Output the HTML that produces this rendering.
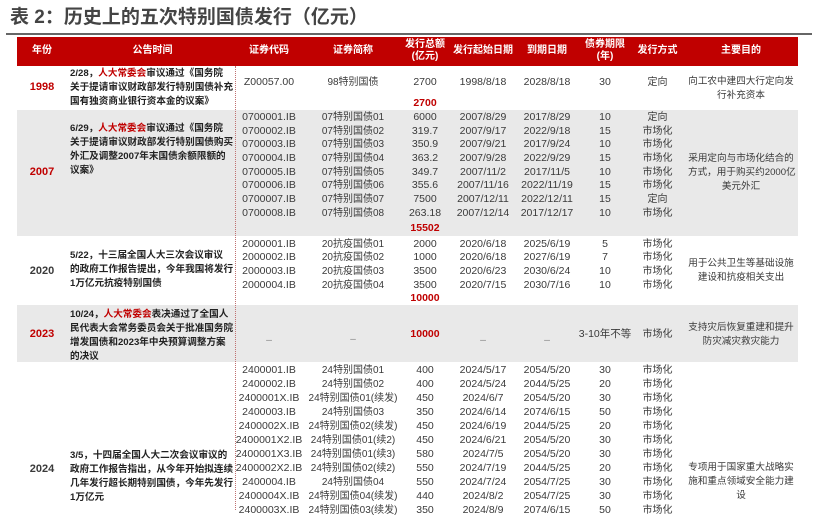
<!DOCTYPE html>
<html><head><meta charset="utf-8"><style>
*{margin:0;padding:0;box-sizing:border-box}
body{width:820px;height:510px;overflow:hidden;background:#fff;position:relative;font-family:"Liberation Sans","Noto Sans CJK SC",sans-serif;color:#3a3a3a;font-size:10.5px}
div{position:absolute}
.t{line-height:14px;height:14px;white-space:nowrap;text-align:center}
.y{left:17px;width:50px;font-weight:bold;font-size:11px}
.a{left:70px;width:170px;text-align:left;font-weight:bold;font-size:9.6px;color:#222}
.cd{left:235px;width:68px}
.nm{left:305px;width:96px;font-size:10px;margin-top:1px}
.am{left:408px;width:34px}
.st{left:452px;width:62px}
.en{left:516px;width:62px}
.tm{left:580px;width:50px}
.me{left:630px;width:55px;font-size:10px;margin-top:1px}
.pu{left:688px;width:106px;font-size:9.6px}
.r{color:#c00000}
.b{font-weight:bold}
.h{color:#fff;font-weight:bold;font-size:10px;line-height:12px;text-align:center;white-space:nowrap}
</style></head><body>
<div style="left:10px;top:5px;font-size:19px;font-weight:bold;color:#444;line-height:26px">表 2：历史上的五次特别国债发行（亿元）</div>
<div style="left:6px;top:33px;width:806px;height:2px;background:#666"></div>
<div style="left:17px;top:37px;width:781px;height:29px;background:#c00000"></div>
<div class="h" style="left:17px;width:50px;top:45px">年份</div>
<div class="h" style="left:70px;width:165px;top:45px">公告时间</div>
<div class="h" style="left:235px;width:68px;top:45px">证券代码</div>
<div class="h" style="left:305px;width:96px;top:45px">证券简称</div>
<div class="h" style="left:404px;width:42px;top:39px">发行总额<br>(亿元)</div>
<div class="h" style="left:450px;width:66px;top:45px">发行起始日期</div>
<div class="h" style="left:516px;width:62px;top:45px">到期日期</div>
<div class="h" style="left:580px;width:50px;top:39px">债券期限<br>(年)</div>
<div class="h" style="left:630px;width:55px;top:45px">发行方式</div>
<div class="h" style="left:688px;width:106px;top:45px">主要目的</div>
<div style="left:17px;top:110px;width:781px;height:126px;background:#e9e9e9"></div>
<div style="left:17px;top:305px;width:781px;height:57px;background:#e9e9e9"></div>
<div style="left:235px;top:66px;height:444px;border-left:1px dotted #c07070"></div>

<!-- 1998 -->
<div class="t y r" style="top:80px">1998</div>
<div class="t a" style="top:67px">2/28，<span class="r">人大常委会</span>审议通过《国务院</div>
<div class="t a" style="top:81px">关于提请审议财政部发行特别国债补充</div>
<div class="t a" style="top:95px">国有独资商业银行资本金的议案》</div>
<div class="t cd" style="top:75px">Z00057.00</div><div class="t nm" style="top:75px">98特别国债</div><div class="t am" style="top:75px">2700</div><div class="t st" style="top:75px">1998/8/18</div><div class="t en" style="top:75px">2028/8/18</div><div class="t tm" style="top:75px">30</div><div class="t me" style="top:75px">定向</div>
<div class="t pu" style="top:75px">向工农中建四大行定向发</div><div class="t pu" style="top:89px">行补充资本</div>
<div class="t am r b" style="top:96px">2700</div>

<!-- 2007 -->
<div class="t y r" style="top:165px">2007</div>
<div class="t a" style="top:122px">6/29，<span class="r">人大常委会</span>审议通过《国务院</div>
<div class="t a" style="top:136px">关于提请审议财政部发行特别国债购买</div>
<div class="t a" style="top:150px">外汇及调整2007年末国债余额限额的</div>
<div class="t a" style="top:164px">议案》</div>
<div class="t cd" style="top:110px">0700001.IB</div><div class="t nm" style="top:110px">07特别国债01</div><div class="t am" style="top:110px">6000</div><div class="t st" style="top:110px">2007/8/29</div><div class="t en" style="top:110px">2017/8/29</div><div class="t tm" style="top:110px">10</div><div class="t me" style="top:110px">定向</div>
<div class="t cd" style="top:124px">0700002.IB</div><div class="t nm" style="top:124px">07特别国债02</div><div class="t am" style="top:124px">319.7</div><div class="t st" style="top:124px">2007/9/17</div><div class="t en" style="top:124px">2022/9/18</div><div class="t tm" style="top:124px">15</div><div class="t me" style="top:124px">市场化</div>
<div class="t cd" style="top:137px">0700003.IB</div><div class="t nm" style="top:137px">07特别国债03</div><div class="t am" style="top:137px">350.9</div><div class="t st" style="top:137px">2007/9/21</div><div class="t en" style="top:137px">2017/9/24</div><div class="t tm" style="top:137px">10</div><div class="t me" style="top:137px">市场化</div>
<div class="t cd" style="top:151px">0700004.IB</div><div class="t nm" style="top:151px">07特别国债04</div><div class="t am" style="top:151px">363.2</div><div class="t st" style="top:151px">2007/9/28</div><div class="t en" style="top:151px">2022/9/29</div><div class="t tm" style="top:151px">15</div><div class="t me" style="top:151px">市场化</div>
<div class="t cd" style="top:165px">0700005.IB</div><div class="t nm" style="top:165px">07特别国债05</div><div class="t am" style="top:165px">349.7</div><div class="t st" style="top:165px">2007/11/2</div><div class="t en" style="top:165px">2017/11/5</div><div class="t tm" style="top:165px">10</div><div class="t me" style="top:165px">市场化</div>
<div class="t cd" style="top:178px">0700006.IB</div><div class="t nm" style="top:178px">07特别国债06</div><div class="t am" style="top:178px">355.6</div><div class="t st" style="top:178px">2007/11/16</div><div class="t en" style="top:178px">2022/11/19</div><div class="t tm" style="top:178px">15</div><div class="t me" style="top:178px">市场化</div>
<div class="t cd" style="top:192px">0700007.IB</div><div class="t nm" style="top:192px">07特别国债07</div><div class="t am" style="top:192px">7500</div><div class="t st" style="top:192px">2007/12/11</div><div class="t en" style="top:192px">2022/12/11</div><div class="t tm" style="top:192px">15</div><div class="t me" style="top:192px">定向</div>
<div class="t cd" style="top:206px">0700008.IB</div><div class="t nm" style="top:206px">07特别国债08</div><div class="t am" style="top:206px">263.18</div><div class="t st" style="top:206px">2007/12/14</div><div class="t en" style="top:206px">2017/12/17</div><div class="t tm" style="top:206px">10</div><div class="t me" style="top:206px">市场化</div>
<div class="t am r b" style="top:221px">15502</div>
<div class="t pu" style="top:152px">采用定向与市场化结合的</div><div class="t pu" style="top:166px">方式，用于购买约2000亿</div><div class="t pu" style="top:180px">美元外汇</div>

<!-- 2020 -->
<div class="t y" style="top:264px">2020</div>
<div class="t a" style="top:249px">5/22，十三届全国人大三次会议审议</div>
<div class="t a" style="top:263px">的政府工作报告提出，今年我国将发行</div>
<div class="t a" style="top:277px">1万亿元抗疫特别国债</div>
<div class="t cd" style="top:237px">2000001.IB</div><div class="t nm" style="top:237px">20抗疫国债01</div><div class="t am" style="top:237px">2000</div><div class="t st" style="top:237px">2020/6/18</div><div class="t en" style="top:237px">2025/6/19</div><div class="t tm" style="top:237px">5</div><div class="t me" style="top:237px">市场化</div>
<div class="t cd" style="top:250px">2000002.IB</div><div class="t nm" style="top:250px">20抗疫国债02</div><div class="t am" style="top:250px">1000</div><div class="t st" style="top:250px">2020/6/18</div><div class="t en" style="top:250px">2027/6/19</div><div class="t tm" style="top:250px">7</div><div class="t me" style="top:250px">市场化</div>
<div class="t cd" style="top:264px">2000003.IB</div><div class="t nm" style="top:264px">20抗疫国债03</div><div class="t am" style="top:264px">3500</div><div class="t st" style="top:264px">2020/6/23</div><div class="t en" style="top:264px">2030/6/24</div><div class="t tm" style="top:264px">10</div><div class="t me" style="top:264px">市场化</div>
<div class="t cd" style="top:278px">2000004.IB</div><div class="t nm" style="top:278px">20抗疫国债04</div><div class="t am" style="top:278px">3500</div><div class="t st" style="top:278px">2020/7/15</div><div class="t en" style="top:278px">2030/7/16</div><div class="t tm" style="top:278px">10</div><div class="t me" style="top:278px">市场化</div>
<div class="t am r b" style="top:291px">10000</div>
<div class="t pu" style="top:257px">用于公共卫生等基础设施</div><div class="t pu" style="top:271px">建设和抗疫相关支出</div>

<!-- 2023 -->
<div class="t y r" style="top:327px">2023</div>
<div class="t a" style="top:308px">10/24，<span class="r">人大常委会</span>表决通过了全国人</div>
<div class="t a" style="top:322px">民代表大会常务委员会关于批准国务院</div>
<div class="t a" style="top:336px">增发国债和2023年中央预算调整方案</div>
<div class="t a" style="top:350px">的决议</div>
<div class="t cd" style="top:333px;color:#888">–</div><div class="t nm" style="top:332px;color:#888">–</div><div class="t am r b" style="top:327px">10000</div><div class="t st" style="top:333px;color:#888">–</div><div class="t en" style="top:333px;color:#888">–</div><div class="t tm" style="top:327px;left:572px;width:66px">3-10年不等</div><div class="t me" style="top:327px">市场化</div>
<div class="t pu" style="top:321px">支持灾后恢复重建和提升</div><div class="t pu" style="top:335px">防灾减灾救灾能力</div>

<!-- 2024 -->
<div class="t y" style="top:462px">2024</div>
<div class="t a" style="top:449px">3/5，十四届全国人大二次会议审议的</div>
<div class="t a" style="top:463px">政府工作报告指出，从今年开始拟连续</div>
<div class="t a" style="top:477px">几年发行超长期特别国债，今年先发行</div>
<div class="t a" style="top:491px">1万亿元</div>
<div class="t cd" style="top:363px">2400001.IB</div><div class="t nm" style="top:363px">24特别国债01</div><div class="t am" style="top:363px">400</div><div class="t st" style="top:363px">2024/5/17</div><div class="t en" style="top:363px">2054/5/20</div><div class="t tm" style="top:363px">30</div><div class="t me" style="top:363px">市场化</div>
<div class="t cd" style="top:377px">2400002.IB</div><div class="t nm" style="top:377px">24特别国债02</div><div class="t am" style="top:377px">400</div><div class="t st" style="top:377px">2024/5/24</div><div class="t en" style="top:377px">2044/5/25</div><div class="t tm" style="top:377px">20</div><div class="t me" style="top:377px">市场化</div>
<div class="t cd" style="top:391px">2400001X.IB</div><div class="t nm" style="top:391px">24特别国债01(续发)</div><div class="t am" style="top:391px">450</div><div class="t st" style="top:391px">2024/6/7</div><div class="t en" style="top:391px">2054/5/20</div><div class="t tm" style="top:391px">30</div><div class="t me" style="top:391px">市场化</div>
<div class="t cd" style="top:405px">2400003.IB</div><div class="t nm" style="top:405px">24特别国债03</div><div class="t am" style="top:405px">350</div><div class="t st" style="top:405px">2024/6/14</div><div class="t en" style="top:405px">2074/6/15</div><div class="t tm" style="top:405px">50</div><div class="t me" style="top:405px">市场化</div>
<div class="t cd" style="top:419px">2400002X.IB</div><div class="t nm" style="top:419px">24特别国债02(续发)</div><div class="t am" style="top:419px">450</div><div class="t st" style="top:419px">2024/6/19</div><div class="t en" style="top:419px">2044/5/25</div><div class="t tm" style="top:419px">20</div><div class="t me" style="top:419px">市场化</div>
<div class="t cd" style="top:433px">2400001X2.IB</div><div class="t nm" style="top:433px">24特别国债01(续2)</div><div class="t am" style="top:433px">450</div><div class="t st" style="top:433px">2024/6/21</div><div class="t en" style="top:433px">2054/5/20</div><div class="t tm" style="top:433px">30</div><div class="t me" style="top:433px">市场化</div>
<div class="t cd" style="top:447px">2400001X3.IB</div><div class="t nm" style="top:447px">24特别国债01(续3)</div><div class="t am" style="top:447px">580</div><div class="t st" style="top:447px">2024/7/5</div><div class="t en" style="top:447px">2054/5/20</div><div class="t tm" style="top:447px">30</div><div class="t me" style="top:447px">市场化</div>
<div class="t cd" style="top:461px">2400002X2.IB</div><div class="t nm" style="top:461px">24特别国债02(续2)</div><div class="t am" style="top:461px">550</div><div class="t st" style="top:461px">2024/7/19</div><div class="t en" style="top:461px">2044/5/25</div><div class="t tm" style="top:461px">20</div><div class="t me" style="top:461px">市场化</div>
<div class="t cd" style="top:475px">2400004.IB</div><div class="t nm" style="top:475px">24特别国债04</div><div class="t am" style="top:475px">550</div><div class="t st" style="top:475px">2024/7/24</div><div class="t en" style="top:475px">2054/7/25</div><div class="t tm" style="top:475px">30</div><div class="t me" style="top:475px">市场化</div>
<div class="t cd" style="top:489px">2400004X.IB</div><div class="t nm" style="top:489px">24特别国债04(续发)</div><div class="t am" style="top:489px">440</div><div class="t st" style="top:489px">2024/8/2</div><div class="t en" style="top:489px">2054/7/25</div><div class="t tm" style="top:489px">30</div><div class="t me" style="top:489px">市场化</div>
<div class="t cd" style="top:503px">2400003X.IB</div><div class="t nm" style="top:503px">24特别国债03(续发)</div><div class="t am" style="top:503px">350</div><div class="t st" style="top:503px">2024/8/9</div><div class="t en" style="top:503px">2074/6/15</div><div class="t tm" style="top:503px">50</div><div class="t me" style="top:503px">市场化</div>
<div class="t pu" style="top:461px">专项用于国家重大战略实</div><div class="t pu" style="top:475px">施和重点领域安全能力建</div><div class="t pu" style="top:489px">设</div>
</body></html>
